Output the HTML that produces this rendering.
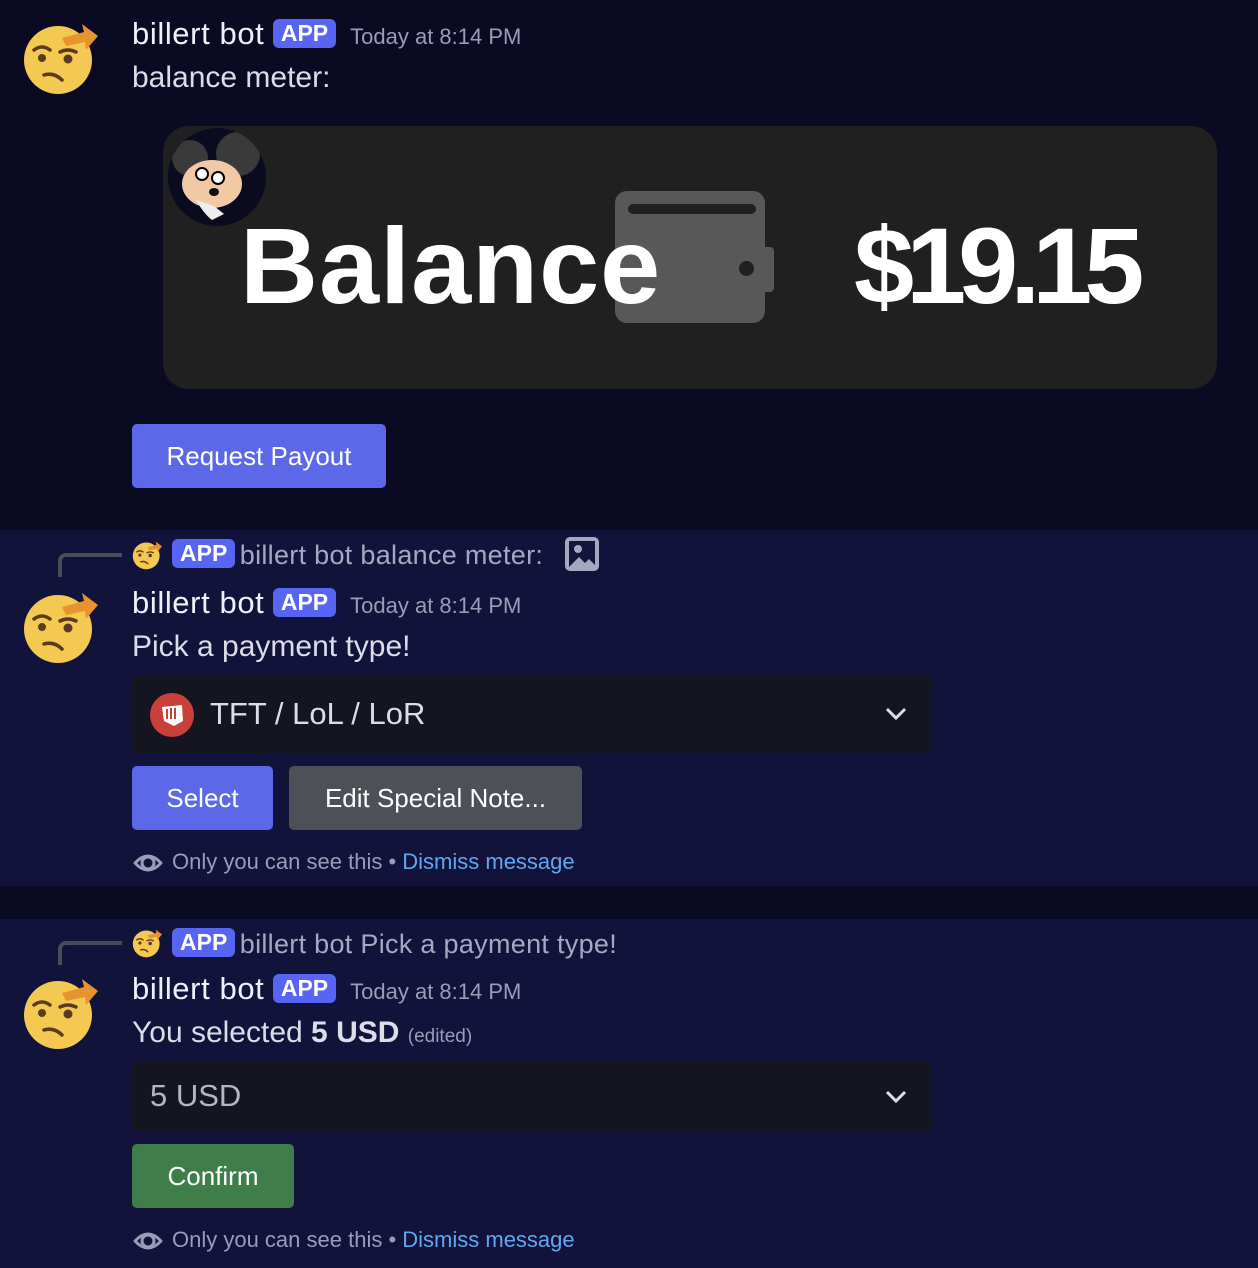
<!DOCTYPE html>
<html><head><meta charset="utf-8"><style>
*{margin:0;padding:0;box-sizing:border-box}
body{width:1258px;height:1268px;background:#0a0a22;font-family:"Liberation Sans",sans-serif;position:relative;overflow:hidden;color:#dcdde8}
.a{position:absolute;white-space:nowrap}
.sec{position:absolute;left:0;width:1258px}
.name{font-size:31px;color:#f0f1f8;letter-spacing:0.6px}
.app{display:inline-block;background:#5865f2;color:#fff;font-weight:bold;font-size:23px;border-radius:6px;padding:1px 8px;vertical-align:3px;line-height:27px;margin-left:4px}
.ts{font-size:22px;color:#9a9cb8;margin-left:14px}
.msg{font-size:30px;color:#dcdde8}
.btn{position:absolute;border-radius:5px;color:#fff;font-size:26px;display:flex;align-items:center;justify-content:center}
.sel{position:absolute;left:132px;width:800px;background:#14151f;border-radius:8px}
.note{font-size:22px;color:#9a9cb8}
.note a{color:#5fa8f0;text-decoration:none}
.rep{position:absolute;border-left:4px solid #4a4c58;border-top:4px solid #4a4c58;border-top-left-radius:8px;width:64px;height:24px}
.small{font-size:27px;color:#a6a8c2;letter-spacing:0.3px}
</style></head><body>
<svg width="0" height="0" style="position:absolute"><defs>
<g id="emo"><circle cx="36" cy="40" r="34" fill="#f4c952"/>
<path d="M40 18 L62 12 L60 4 L76 16 L64 30 L63 22 L44 26 Z" fill="#e8932e"/>
<path d="M12 30 Q20 24 28 30" stroke="#5a3b1c" stroke-width="3.5" fill="none" stroke-linecap="round"/>
<path d="M38 32 Q46 28 54 32" stroke="#5a3b1c" stroke-width="3.5" fill="none" stroke-linecap="round"/>
<circle cx="20" cy="38" r="4" fill="#5a3b1c"/><circle cx="46" cy="39" r="4.5" fill="#5a3b1c"/>
<path d="M22 55 Q32 52 40 60" stroke="#5a3b1c" stroke-width="3.5" fill="none" stroke-linecap="round"/></g>
<g id="eye"><path d="M2 15 Q15 1 28 15 Q15 29 2 15 Z" stroke="#9a9cb8" stroke-width="3" fill="none" stroke-linejoin="round"/><circle cx="15" cy="15" r="6" fill="none" stroke="#9a9cb8" stroke-width="3"/></g>
</defs></svg>

<!-- message 1 -->
<svg class="a" style="left:22px;top:20px" width="76" height="78" viewBox="0 0 76 78"><use href="#emo"/></svg>
<div class="a" style="left:132px;top:16px"><span class="name">billert bot</span> <span class="app">APP</span><span class="ts">Today at 8:14 PM</span></div>
<div class="a msg" style="left:132px;top:61px">balance meter:</div>
<div class="a" style="left:163px;top:126px;width:1054px;height:263px;background:#202020;border-radius:26px"></div>
<div class="a" style="left:168px;top:128px;width:98px;height:98px;border-radius:50%;background:#0b0b20;overflow:hidden">
<svg width="98" height="98" viewBox="0 0 98 98"><circle cx="22" cy="30" r="18" fill="#3a3a3a"/><circle cx="70" cy="26" r="22" fill="#3a3a3a"/><ellipse cx="44" cy="56" rx="30" ry="24" fill="#f1c9a5"/><circle cx="34" cy="46" r="6" fill="#fff" stroke="#000" stroke-width="2"/><circle cx="50" cy="50" r="6" fill="#fff" stroke="#000" stroke-width="2"/><ellipse cx="46" cy="64" rx="5" ry="4" fill="#111"/><path d="M28 72 Q36 86 44 92 L56 86 L46 78 Z" fill="#eee"/></svg></div>
<div class="a" style="left:615px;top:191px;width:150px;height:132px;background:#585858;border-radius:12px"></div>
<div class="a" style="left:628px;top:204px;width:128px;height:10px;background:#202020;border-radius:5px"></div>
<div class="a" style="left:755px;top:247px;width:19px;height:45px;background:#585858;border-radius:4px"></div>
<div class="a" style="left:739px;top:261px;width:15px;height:15px;background:#202020;border-radius:50%"></div>
<div class="a" style="left:240px;top:201px;font-size:108px;font-weight:bold;color:#fff;letter-spacing:1px;line-height:130px">Balance</div>
<div class="a" style="left:854px;top:201px;font-size:108px;font-weight:bold;color:#fff;letter-spacing:-8px;line-height:130px">$19.15</div>
<div class="btn" style="left:132px;top:424px;width:254px;height:64px;background:#5d68e8">Request Payout</div>

<!-- message 2 -->
<div class="sec" style="top:530px;height:356px;background:#12133a"></div>
<div class="rep" style="left:58px;top:553px"></div>
<svg class="a" style="left:132px;top:540px" width="30" height="31" viewBox="0 0 76 78"><use href="#emo"/></svg>
<div class="a" style="left:172px;top:539px"><span class="app" style="margin-left:0">APP</span> <span class="small">billert bot balance meter:</span></div>
<div class="a" style="left:565px;top:537px;width:34px;height:34px;background:#a6a8c2;border-radius:5px"><svg width="34" height="34"><rect x="4" y="4" width="26" height="26" fill="#14153a"/><circle cx="13" cy="12" r="4" fill="#a6a8c2"/><path d="M4 30 L14 20 L20 26 L24 22 L30 28 V30Z" fill="#a6a8c2"/></svg></div>
<svg class="a" style="left:22px;top:589px" width="76" height="78" viewBox="0 0 76 78"><use href="#emo"/></svg>
<div class="a" style="left:132px;top:585px"><span class="name">billert bot</span> <span class="app">APP</span><span class="ts">Today at 8:14 PM</span></div>
<div class="a msg" style="left:132px;top:630px">Pick a payment type!</div>
<div class="sel" style="top:675px;height:78px"></div>
<div class="a" style="left:150px;top:693px;width:44px;height:44px;border-radius:50%;background:#c8403a"><svg width="44" height="44"><path d="M12 14 L32 12 L33 28 L24 33 L14 28 Z" fill="#fff"/><path d="M17 16v10M21 15v11M25 15v11" stroke="#c8403a" stroke-width="2"/></svg></div>
<div class="a" style="left:210px;top:696px;font-size:31px;color:#dcdde8">TFT / LoL / LoR</div>
<svg class="a" style="left:884px;top:705px" width="24" height="18"><path d="M3 4 L12 13 L21 4" stroke="#dcdde8" stroke-width="3" fill="none"/></svg>
<div class="btn" style="left:132px;top:766px;width:141px;height:64px;background:#5d68e8">Select</div>
<div class="btn" style="left:289px;top:766px;width:293px;height:64px;background:#4e5058">Edit Special Note...</div>
<svg class="a" style="left:133px;top:848px" width="30" height="30"><use href="#eye"/></svg>
<div class="a note" style="left:172px;top:849px">Only you can see this • <a>Dismiss message</a></div>

<!-- message 3 -->
<div class="sec" style="top:919px;height:349px;background:#12133a"></div>
<div class="rep" style="left:58px;top:941px"></div>
<svg class="a" style="left:132px;top:928px" width="30" height="31" viewBox="0 0 76 78"><use href="#emo"/></svg>
<div class="a" style="left:172px;top:928px"><span class="app" style="margin-left:0">APP</span> <span class="small">billert bot Pick a payment type!</span></div>
<svg class="a" style="left:22px;top:975px" width="76" height="78" viewBox="0 0 76 78"><use href="#emo"/></svg>
<div class="a" style="left:132px;top:971px"><span class="name">billert bot</span> <span class="app">APP</span><span class="ts">Today at 8:14 PM</span></div>
<div class="a msg" style="left:132px;top:1016px">You selected <b>5 USD</b> <span style="font-size:19px;color:#9a9cb8">(edited)</span></div>
<div class="sel" style="top:1061px;height:71px"></div>
<div class="a" style="left:150px;top:1078px;font-size:31px;color:#b4b6c8">5 USD</div>
<svg class="a" style="left:884px;top:1088px" width="24" height="18"><path d="M3 4 L12 13 L21 4" stroke="#dcdde8" stroke-width="3" fill="none"/></svg>
<div class="btn" style="left:132px;top:1144px;width:162px;height:64px;background:#3f7d4b">Confirm</div>
<svg class="a" style="left:133px;top:1226px" width="30" height="30"><use href="#eye"/></svg>
<div class="a note" style="left:172px;top:1227px">Only you can see this • <a>Dismiss message</a></div>
</body></html>
